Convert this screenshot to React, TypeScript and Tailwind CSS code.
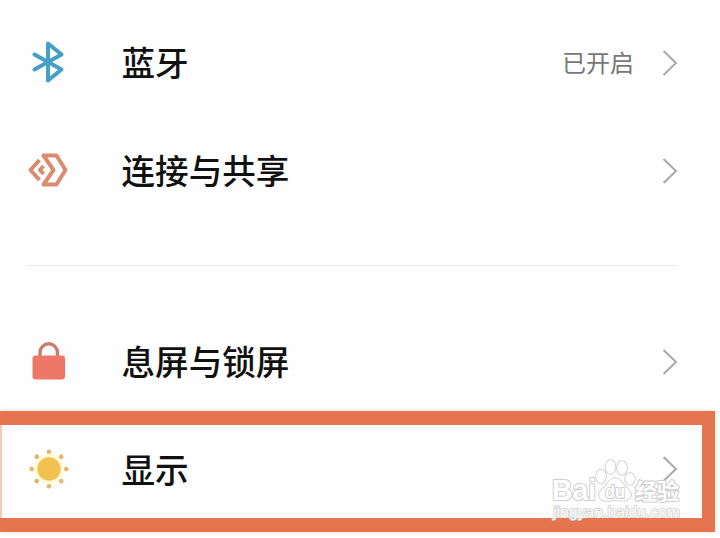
import type { ReactNode } from 'react'

function BluetoothIcon() {
  return (
    <svg className="-mt-[2px]" width="44" height="48" viewBox="0 0 44 48" fill="none" stroke="#459fc8" strokeWidth="4" strokeLinecap="round" strokeLinejoin="round">
      <path d="M8.5 16.500 35.500 31.500 22 42.500V5.500L35.500 16.500 8.500 31.500" />
    </svg>
  )
}

function ShareIcon() {
  return (
    <svg className="-mt-[2px]" width="44" height="48" viewBox="0 0 44 48" fill="none" stroke="#d98c72" strokeWidth="4" strokeLinejoin="round">
      <path d="M17.500 9.500H30.500L39.500 24 30.500 38.500H17.500L27.500 24Z" />
      <path d="M13.500 14 4.500 24 13.500 34" />
      <path d="M17.500 20 14 24 17.500 28" />
    </svg>
  )
}

function LockIcon() {
  return (
    <svg className="-mt-[2px]" width="44" height="48" viewBox="0 0 44 48" fill="none">
      <path d="M14 20V15.500a8.700 8.700 0 0 1 17.400 0V20" stroke="#c77e6c" strokeWidth="3.400" />
      <rect x="6.500" y="18.500" width="32.500" height="24" rx="3" fill="#ed7867" />
    </svg>
  )
}

const rays = [0, 45, 90, 135, 180, 225, 270, 315]

function SunIcon() {
  return (
    <svg className="-mt-[2px]" width="44" height="48" viewBox="0 0 44 48">
      <circle cx="23" cy="24" r="15" fill="#fffbd6" />
      <circle cx="23" cy="24" r="11.700" fill="#f1c151" />
      {rays.map(a => (
        <circle key={a} cx="23" cy="6.700" r="2.300" fill="#e4b568" transform={`rotate(${a} 23 24)`} />
      ))}
    </svg>
  )
}

function Chevron() {
  return (
    <svg className="-mt-[1px]" width="16" height="26" viewBox="0 0 16 26" fill="none" stroke="#aaa" strokeWidth="2">
      <path d="M1.500 1 14 13 1.500 25" />
    </svg>
  )
}

interface RowProps {
  icon: ReactNode
  label: string
  value?: string
}

function Row({ icon, label, value }: RowProps) {
  return (
    <div className="flex h-[108px] w-[678px] shrink-0 items-center pl-[26px]">
      {icon}
      <span className="ml-[51.5px] flex-1 pb-[2px] text-[33.6px] leading-none font-medium text-[#111]">{label}</span>
      {value && <span className="mr-[28px] pb-[2px] text-[24px] leading-none text-[#777]">{value}</span>}
      <Chevron />
    </div>
  )
}

function Watermark() {
  return (
    <svg
      className="absolute left-[548px] top-[454px]"
      width="140"
      height="72"
      viewBox="0 0 140 72"
      fill="#fff"
      stroke="#cfcfcf"
      strokeWidth="2.2"
      strokeLinejoin="round"
      paintOrder="stroke"
      fontFamily='"Liberation Sans", "Noto Sans CJK SC", sans-serif'
    >
      <text x="4" y="46" fontSize="30" fontWeight="700" textLength="44" lengthAdjust="spacingAndGlyphs">Bai</text>
      <g fillOpacity="0.8" strokeWidth="1.600">
        <ellipse cx="53" cy="22.500" rx="5" ry="7" />
        <ellipse cx="62.500" cy="13" rx="5" ry="7" />
        <ellipse cx="74" cy="14" rx="5" ry="7" />
        <ellipse cx="82" cy="25" rx="5" ry="6" />
        <path d="M67 24C61 24 60 30 55 34 49 39 50 46 57 47 61 48 63 46 67 46S75 48 79 46C85 43 84 38 79 34 74 30 73 24 67 24Z" />
      </g>
      <text x="57" y="44" fontSize="19" fontWeight="700" textLength="20" lengthAdjust="spacingAndGlyphs">du</text>
      <text x="87" y="45" fontSize="22" fontWeight="700">经验</text>
      <text x="5" y="63" fontSize="15.500" strokeWidth="1.600" textLength="127">jingyan.baidu.com</text>
    </svg>
  )
}

export default function App() {
  return (
    <main className="relative flex h-[538px] w-[720px] flex-col overflow-hidden bg-[#fefefe] pt-[9px] font-['Noto_Sans_CJK_SC',sans-serif]">
      <Row icon={<BluetoothIcon />} label="蓝牙" value="已开启" />
      <Row icon={<ShareIcon />} label="连接与共享" />
      <hr className="mt-[40px] mr-[42px] ml-[26px] border-[#ebebeb]" />
      <div className="mt-[42px] h-[103px]">
        <Row icon={<LockIcon />} label="息屏与锁屏" />
      </div>
      <section className="h-[121px] w-[715px] border-y-[14px] border-r-[13px] border-[#e5754f] shadow-[0_0_5px_#fbe3d3]">
        <div className="flex h-full items-center border-l-2 border-[#f9c9b8]">
          <div className="-mt-[4px] -ml-[2px]">
            <Row icon={<SunIcon />} label="显示" />
          </div>
        </div>
      </section>
      <Watermark />
    </main>
  )
}
